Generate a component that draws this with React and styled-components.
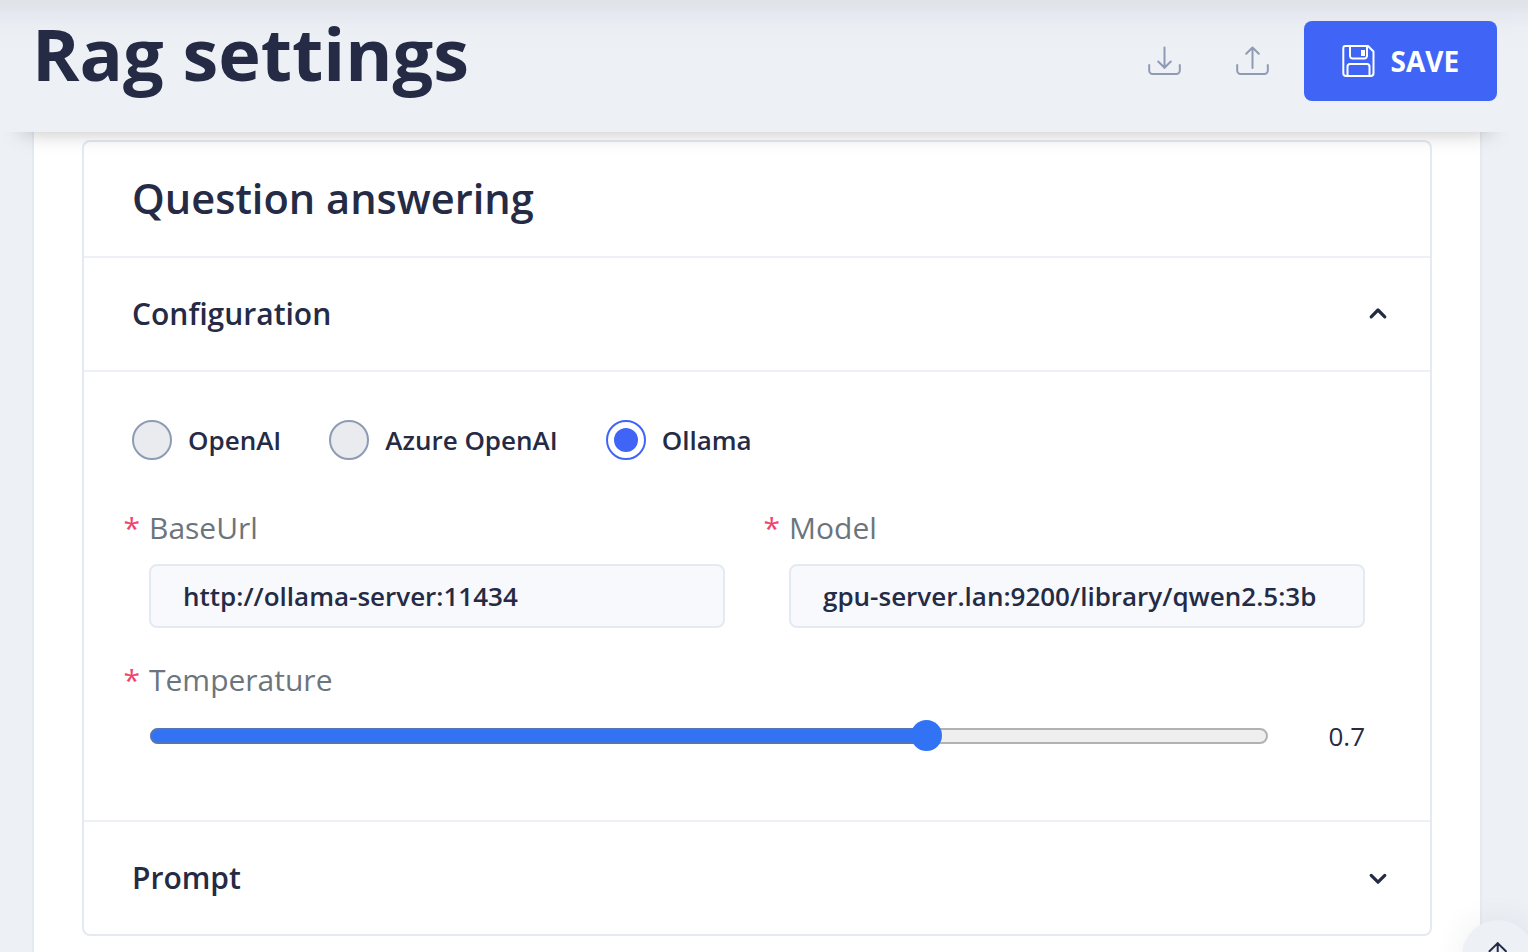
import React, { useState } from "react";
import styled, { createGlobalStyle, css } from "styled-components";

const GlobalStyle = createGlobalStyle`
  *, *::before, *::after { box-sizing: border-box; }
  html, body { margin: 0; padding: 0; overflow: hidden; }
  body {
    font-family: "Open Sans", sans-serif;
    color: #252b45;
    background: #edf1f7;
  }
`;

const Page = styled.div`
  position: relative;
  display: flex;
  flex-direction: column;
  width: 1528px;
  height: 952px;
  overflow: hidden;
  background: #edf1f6;
`;

const Header = styled.header`
  position: relative;
  z-index: 1;
  flex: none;
  display: flex;
  justify-content: space-between;
  align-items: flex-start;
  height: 132px;
  margin: 0 16px 0 0;
  padding: 21px 15px 0 32px;
  background: linear-gradient(
    #dfe2e6 0,
    #e1e4e9 7px,
    #e5e8f0 13px,
    #e7eaf1 20px,
    #eaedf2 25px,
    #eceff4 38px,
    #edf1f6 50px
  );
  box-shadow: 0 22px 20px -22px rgba(0, 0, 0, 0.26);
`;

const HeaderEdge = styled.div`
  position: absolute;
  top: 0;
  right: 0;
  width: 16px;
  height: 50px;
  background: linear-gradient(#dfe2e6 0, #e1e4e9 7px, #e6e9f0 14px, #ebeef3 28px, #edf1f6 50px);
`;

const Title = styled.h1`
  margin: -16px 0 0;
  font-size: 72px;
  line-height: 96px;
  font-weight: 700;
  color: #252b45;
`;

const Actions = styled.div`
  display: flex;
  align-items: center;
  height: 80px;
`;

const IconButton = styled.button`
  display: flex;
  align-items: center;
  justify-content: center;
  width: 88px;
  height: 80px;
  padding: 0;
  border: 0;
  background: none;
  color: #8f9bb3;
`;

const SaveButton = styled.button`
  display: flex;
  align-items: center;
  gap: 14.5px;
  width: 193px;
  height: 80px;
  margin-left: 8px;
  padding: 0 0 0 36px;
  border: 0;
  border-radius: 8px;
  background: #4065f6;
  color: #fff;
  font: 700 28px/32px "Open Sans", sans-serif;
`;

const Panel = styled.main`
  flex: 1;
  display: flex;
  flex-direction: column;
  width: 1450px;
  margin-left: 32px;
  padding: 8px 48px 0;
  background: #fff;
  border: solid #e4e9f2;
  border-width: 0 2px;
`;

const Card = styled.section`
  height: 796px;
  flex: none;
  border: 2px solid #e4e9f2;
  border-radius: 8px;
  background: #fff;
`;

const CardHeader = styled.header`
  height: 116px;
  padding: 24px 48px 0;
  border-bottom: 2px solid #edf1f7;
`;

const CardTitle = styled.h5`
  margin: 0;
  font-size: 41.6px;
  line-height: 64px;
  font-weight: 600;
`;

const SectionHeader = styled.div`
  display: flex;
  align-items: center;
  justify-content: space-between;
  height: ${(p) => (p.$last ? 112 : 114)}px;
  padding: 0 40px 0 48px;
  ${(p) =>
    !p.$last &&
    css`
      border-bottom: 2px solid #edf1f7;
    `}
  font-size: 30px;
  line-height: 48px;
  font-weight: 600;
`;

const SectionBody = styled.div`
  height: 450px;
  padding: 48px 48px 0;
  border-bottom: 2px solid #edf1f7;
`;

const RadioGroup = styled.div`
  display: flex;
  gap: 48px;
`;

const RadioLabel = styled.label`
  display: flex;
  align-items: center;
  gap: 16px;
  height: 40px;
  font-size: 26px;
  line-height: 36px;
  font-weight: 600;
`;

const RadioMark = styled.span`
  display: flex;
  align-items: center;
  justify-content: center;
  width: 40px;
  height: 40px;
  border-radius: 50%;
  border: 2px solid ${(p) => (p.$checked ? "#4065f6" : "#8f9bb3")};
  background: ${(p) => (p.$checked ? "#fff" : "#e9ebef")};

  &::after {
    content: "";
    width: 24px;
    height: 24px;
    border-radius: 50%;
    background: ${(p) => (p.$checked ? "#4065f6" : "transparent")};
  }
`;

const FieldGrid = styled.div`
  display: grid;
  grid-template-columns: 576px 576px;
  column-gap: 64px;
  row-gap: 32px;
  margin: 48px 0 0 17px;
`;

const Field = styled.div`
  display: flex;
  flex-direction: column;
  grid-column: ${(p) => (p.$wide ? "1 / -1" : "auto")};
`;

const FieldLabel = styled.label`
  height: 40px;
  margin: 0 0 16px -25.5px;
  font-size: 30px;
  line-height: 40px;
  font-weight: 400;
  color: #6c757d;

  &::before {
    content: "*";
    display: inline-block;
    width: 25.5px;
    color: #f0436e;
  }
`;

const TextInput = styled.input`
  width: 576px;
  height: 64px;
  padding: 0 32px;
  border: 2px solid #e4e9f2;
  border-radius: 8px;
  outline: 0;
  background: #f7f9fc;
  color: #252b45;
  font: 600 26px/48px "Open Sans", sans-serif;
`;

const SliderRow = styled.div`
  display: flex;
  align-items: center;
  justify-content: space-between;
  height: 40px;
`;

const Track = styled.div`
  position: relative;
  width: 1118px;
  height: 16px;
  margin-left: 1px;
  border: 2px solid #b2b2b2;
  border-radius: 8px;
  background: #efefef;
`;

const TrackFill = styled.div`
  position: absolute;
  inset: -2px auto -2px -2px;
  border: 2px solid #5476b8;
  border-radius: 8px 0 0 8px;
  background: #3273f6;
`;

const Thumb = styled.div`
  position: absolute;
  top: -10px;
  width: 31px;
  height: 31px;
  margin-left: -18.2px;
  border-radius: 50%;
  background: #3273f6;
`;

const SliderValue = styled.output`
  font-size: 26px;
  line-height: 32px;
`;

const ScrollTop = styled.button`
  position: absolute;
  z-index: 2;
  left: 1462px;
  top: 920px;
  width: 72px;
  height: 72px;
  padding: 0;
  border: 0;
  border-radius: 50%;
  background: #edf1f6;
  color: #252b45;
  box-shadow: 0 0 32px rgba(44, 51, 73, 0.08);
`;

const TrayIcon = ({ up }) => (
  <svg width="33" height="30" viewBox="0 0 33 30" fill="none" stroke="currentColor" strokeWidth="2" strokeLinecap="round" strokeLinejoin="round">
    <path d="M1.200 19v5.500a3.500 3.500 0 0 0 3.500 3.500h23.600a3.500 3.500 0 0 0 3.500-3.500V19" />
    <path d={up ? "M16.500 22V1.500M10.200 7.800 16.500 1.500l6.300 6.300" : "M16.500 1.500V22M10.200 15.500l6.300 6.300 6.300-6.300"} />
  </svg>
);

const FloppyIcon = () => (
  <svg width="36" height="36" viewBox="0 0 36 36" fill="none" stroke="currentColor" strokeWidth="2" strokeLinejoin="round">
    <path d="M5.300 3h22.700L33.500 8.500V30.200a2.800 2.800 0 0 1-2.800 2.800H6.100a2.800 2.800 0 0 1-2.800-2.800V5a2 2 0 0 1 2-2Z" />
    <path d="M10 3v10a2.500 2.500 0 0 0 2.500 2.500h12a2.500 2.500 0 0 0 2.500-2.500V3" />
    <path d="M7.500 33V23.500a2.500 2.500 0 0 1 2.500-2.500h17a2.500 2.500 0 0 1 2.500 2.500V33" />
    <path d="M21 7h4v6h-4z" fill="currentColor" stroke="none" />
  </svg>
);

const Chevron = ({ up }) => (
  <svg width="24" height="24" viewBox="0 0 24 24" fill="none" stroke="currentColor" strokeWidth="3.2" strokeLinecap="round" strokeLinejoin="round">
    <path d={up ? "M5.200 14.800 12 8l6.800 6.800" : "M5.200 9.400l6.800 6.800 6.800-6.800"} />
  </svg>
);

const ArrowUp = styled.svg`
  position: absolute;
  left: 25px;
  top: 20px;
`;

const PROVIDERS = ["OpenAI", "Azure OpenAI", "Ollama"];

export default function App() {
  const [provider, setProvider] = useState("Ollama");
  const temperature = 0.7;
  const offset = 15 + (1118 - 32) * temperature + 2;

  return (
    <>
      <GlobalStyle />
      <Page>
        <Header>
          <Title>Rag settings</Title>
          <Actions>
            <IconButton aria-label="Download"><TrayIcon /></IconButton>
            <IconButton aria-label="Upload"><TrayIcon up /></IconButton>
            <SaveButton><FloppyIcon />SAVE</SaveButton>
          </Actions>
        </Header>
        <HeaderEdge />
        <Panel>
          <Card>
            <CardHeader><CardTitle>Question answering</CardTitle></CardHeader>
            <SectionHeader>Configuration<Chevron up /></SectionHeader>
            <SectionBody>
              <RadioGroup>
                {PROVIDERS.map((name) => (
                  <RadioLabel key={name} onClick={() => setProvider(name)}>
                    <RadioMark $checked={name === provider} />
                    {name}
                  </RadioLabel>
                ))}
              </RadioGroup>
              <FieldGrid>
                <Field>
                  <FieldLabel>BaseUrl</FieldLabel>
                  <TextInput defaultValue="http://ollama-server:11434" />
                </Field>
                <Field>
                  <FieldLabel>Model</FieldLabel>
                  <TextInput defaultValue="gpu-server.lan:9200/library/qwen2.5:3b" />
                </Field>
                <Field $wide>
                  <FieldLabel>Temperature</FieldLabel>
                  <SliderRow>
                    <Track>
                      <TrackFill style={{ width: offset }} />
                      <Thumb style={{ left: offset }} />
                    </Track>
                    <SliderValue>{temperature}</SliderValue>
                  </SliderRow>
                </Field>
              </FieldGrid>
            </SectionBody>
            <SectionHeader $last>Prompt<Chevron /></SectionHeader>
          </Card>
        </Panel>
        <ScrollTop aria-label="Scroll to top">
          <ArrowUp width="22" height="32" viewBox="0 0 22 32" fill="none" stroke="currentColor" strokeWidth="2" strokeLinecap="round" strokeLinejoin="round">
            <path d="M10.700 30V3M2.500 11.300l8.200-8.200 8.200 8.200" />
          </ArrowUp>
        </ScrollTop>
      </Page>
    </>
  );
}
